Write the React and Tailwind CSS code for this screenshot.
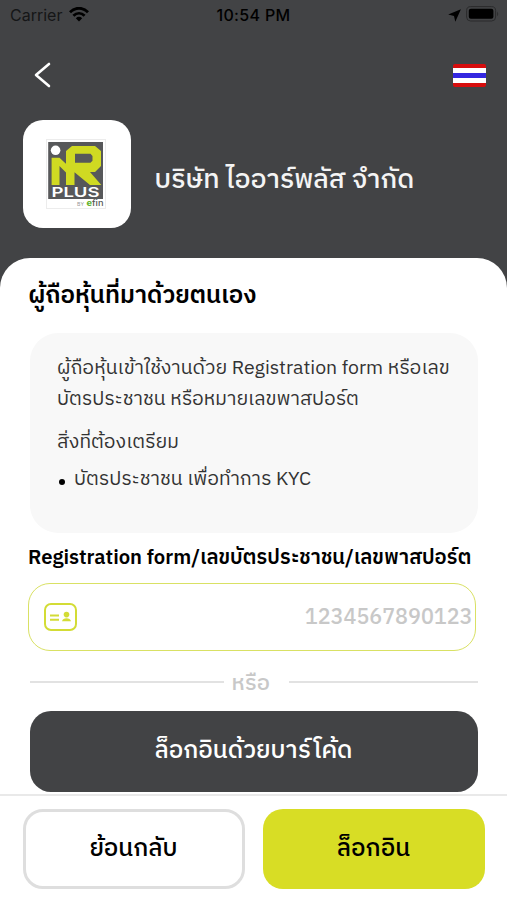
import React, { useState } from 'react';

const StatusBar = () => (
    <div className="flex h-[30px] items-center justify-between pl-[10px] pr-[8px] font-['Inter',sans-serif] text-[16px] text-black">
        <div className="flex w-[150px] items-center gap-[7px]">
            <span className="text-[#151617]">Carrier</span>
            <svg className="-mt-[1px] h-[15px] w-[20px]" viewBox="0 0 20 15" fill="none" stroke="currentColor" strokeWidth="2.8">
                <path d="M1 5.2C6-.1 14-.1 19 5.2" />
                <path d="M4.4 8.7c3.3-3.2 7.9-3.2 11.2 0" />
                <path d="M6.8 11.2a4.7 4.7 0 0 1 6.4 0L10 14.6z" fill="currentColor" stroke="none" />
            </svg>
        </div>
        <span className="-ml-[2px] text-[16px] font-medium tracking-[0.35px]">10:54 PM</span>
        <div className="flex w-[150px] items-center justify-end gap-[5px]">
            <svg className="h-[13px] w-[13px]" viewBox="0 0 13 13" fill="currentColor">
                <path d="M12.9.2.2 5.4 6 6.9l1.3 5.9z" />
            </svg>
            <svg className="-mt-[2px] h-[16px] w-[33px]" viewBox="0 0 33 16">
                <rect x=".6" y=".6" width="29" height="14.4" rx="4" fill="none" stroke="#2a2b2c" />
                <rect x="2.8" y="2.8" width="24.6" height="10" rx="2" fill="currentColor" />
                <path d="M31.2 5.5q2 2.4 0 4.8z" fill="#2a2b2c" />
            </svg>
        </div>
    </div>
);

const Logo = () => (
    <div className="flex h-[108px] w-[108px] items-center justify-center rounded-[20px] bg-white">
        <svg className="h-[70px] w-[62px]" viewBox="0 0 62 70">
            <rect x=".5" y=".5" width="59" height="69" fill="#fff" stroke="#ececec" />
            <rect x="2.2" y="3" width="54.8" height="57" fill="#57585a" />
            <circle cx="9.6" cy="11.3" r="4.8" fill="#fff" />
            <path d="M5.6 18.7h7.9l8 7.6h5V46h-6.5V33.5L13.5 27v19H5.6z" fill="#d0da22" />
            <path
                fillRule="evenodd"
                d="M26 7h23l6 5v15l-6 6h-5L55.3 46H44L28.5 33.2V46H20V12zm3 7.8v9h15.5l2-2V17l-2-2.2z"
                fill="#d0da22"
            />
            <text x="5.5" y="57.8" textLength="48" lengthAdjust="spacingAndGlyphs" fontFamily="Inter, sans-serif" fontWeight="600" fontSize="13" fill="#fff">PLUS</text>
            <text x="31" y="67" fontFamily="Inter, sans-serif" fontSize="5.2" fill="#999">BY</text>
            <text x="40.5" y="67.3" textLength="17" lengthAdjust="spacingAndGlyphs" fontFamily="Inter, sans-serif" fontWeight="500" fontSize="8.5" fill="#555">
                <tspan fill="#65b32e" fontWeight="800">e</tspan>fin
            </text>
        </svg>
    </div>
);

const ThaiFlag = () => (
    <div className="flex h-[23px] w-[33px] flex-col overflow-hidden rounded-[2px]">
        <div className="h-[4px] bg-[#d60d0d]" />
        <div className="h-[5px] bg-white" />
        <div className="h-[5px] bg-[#3427e0]" />
        <div className="h-[5px] bg-white" />
        <div className="h-[4px] bg-[#d60d0d]" />
    </div>
);

const IdCardIcon = () => (
    <svg className="h-[28px] w-[33px] shrink-0" viewBox="0 0 33 28" fill="none" stroke="#d3dc35" strokeWidth="2">
        <rect x="1" y="1" width="31" height="26" rx="6" />
        <path d="M6 12.4h9M6 16.8h9" />
        <circle cx="22.5" cy="11.6" r="2.8" fill="#d3dc35" stroke="none" />
        <path d="M18 18.2c.6-4 8.4-4 9 0z" fill="#d3dc35" stroke="none" />
    </svg>
);

const App = () => {
    const [idNumber, setIdNumber] = useState('');

    return (
        <div className="flex h-[900px] w-[507px] flex-col overflow-hidden bg-[#424345] font-['IBM_Plex_Sans_Thai','Noto_Sans_Thai','Noto_Sans',sans-serif]">
            <StatusBar />
            <header className="h-[228px] shrink-0">
                <div className="flex h-[90px] items-center justify-between pl-[34px] pr-[21px]">
                    <button type="button" aria-label="Back">
                        <svg className="h-[26px] w-[17px]" viewBox="0 0 17 26" fill="none" stroke="#fff" strokeWidth="2.6" strokeLinecap="round" strokeLinejoin="round">
                            <path d="M15 2 2 13l13 11" />
                        </svg>
                    </button>
                    <ThaiFlag />
                </div>
                <div className="flex items-center gap-[24px] pl-[22.5px]">
                    <Logo />
                    <h1 className="mt-[13px] whitespace-nowrap text-[26.8px] font-medium text-[#f4f4f4]">บริษัท ไออาร์พลัส จำกัด</h1>
                </div>
            </header>

            <main className="flex h-[536px] shrink-0 flex-col rounded-t-[30px] bg-white px-[29.5px]">
                <h2 className="-ml-[1px] flex h-[75px] items-center whitespace-nowrap pt-[2px] text-[24.2px] font-semibold text-black">ผู้ถือหุ้นที่มาด้วยตนเอง</h2>
                <section className="h-[200px] rounded-[28px] bg-[#f8f8f8] px-[27.5px] pt-[20px] text-[19.5px] text-[#333]">
                    <p className="whitespace-nowrap leading-[31px]">ผู้ถือหุ้นเข้าใช้งานด้วย Registration form หรือเลข</p>
                    <p className="whitespace-nowrap leading-[31px]">บัตรประชาชน หรือหมายเลขพาสปอร์ต</p>
                    <p className="mt-[12px] whitespace-nowrap leading-[31px]">สิ่งที่ต้องเตรียม</p>
                    <div className="mt-[6px] flex items-center gap-[9px] leading-[31px]">
                        <span className="mt-[5px] ml-[2px] h-[6px] w-[6px] rounded-full bg-black" />
                        <span className="whitespace-nowrap">บัตรประชาชน เพื่อทำการ KYC</span>
                    </div>
                </section>
                <label htmlFor="idNumber" className="-ml-[1.5px] flex h-[50px] items-center whitespace-nowrap pt-[1px] text-[20.25px] font-semibold text-black">
                    Registration form/เลขบัตรประชาชน/เลขพาสปอร์ต
                </label>
                <div className="-ml-[2px] flex h-[68px] w-[448px] items-center rounded-[22px] border-[1.5px] border-[#d9e164] pl-[15px] pr-[2px]">
                    <IdCardIcon />
                    <input
                        id="idNumber"
                        value={idNumber}
                        onChange={(e) => setIdNumber(e.target.value)}
                        placeholder="1234567890123"
                        className="min-w-0 flex-1 pt-[2px] text-right text-[21.5px] font-medium outline-none placeholder:text-[#c8c8c8]"
                    />
                </div>
                <div className="flex h-[60px] items-center">
                    <div className="mt-[2px] h-[2px] w-[194px] bg-[#e2e2e2]" />
                    <span className="mt-[4px] ml-[8px] w-[40px] whitespace-nowrap text-[22px] font-medium text-[#c8c8c8]">หรือ</span>
                    <div className="mt-[2px] ml-auto h-[2px] w-[189px] bg-[#e2e2e2]" />
                </div>
                <button type="button" className="h-[81px] w-[448px] shrink-0 rounded-[21px] bg-[#424345] text-[24.2px] font-medium text-white">
                    ล็อกอินด้วยบาร์โค้ด
                </button>
            </main>

            <footer className="flex flex-1 gap-[18px] border-t-2 border-[#e9e9e9] bg-white px-[22.5px] pt-[13px]">
                <button type="button" className="h-[80px] w-[222px] rounded-[20px] border-[3px] border-[#dedede] text-[24.2px] font-medium text-black">ย้อนกลับ</button>
                <button type="button" className="h-[80px] w-[222px] rounded-[20px] bg-[#d8dd25] text-[24.2px] font-medium text-black">ล็อกอิน</button>
            </footer>
        </div>
    );
};

export default App;
